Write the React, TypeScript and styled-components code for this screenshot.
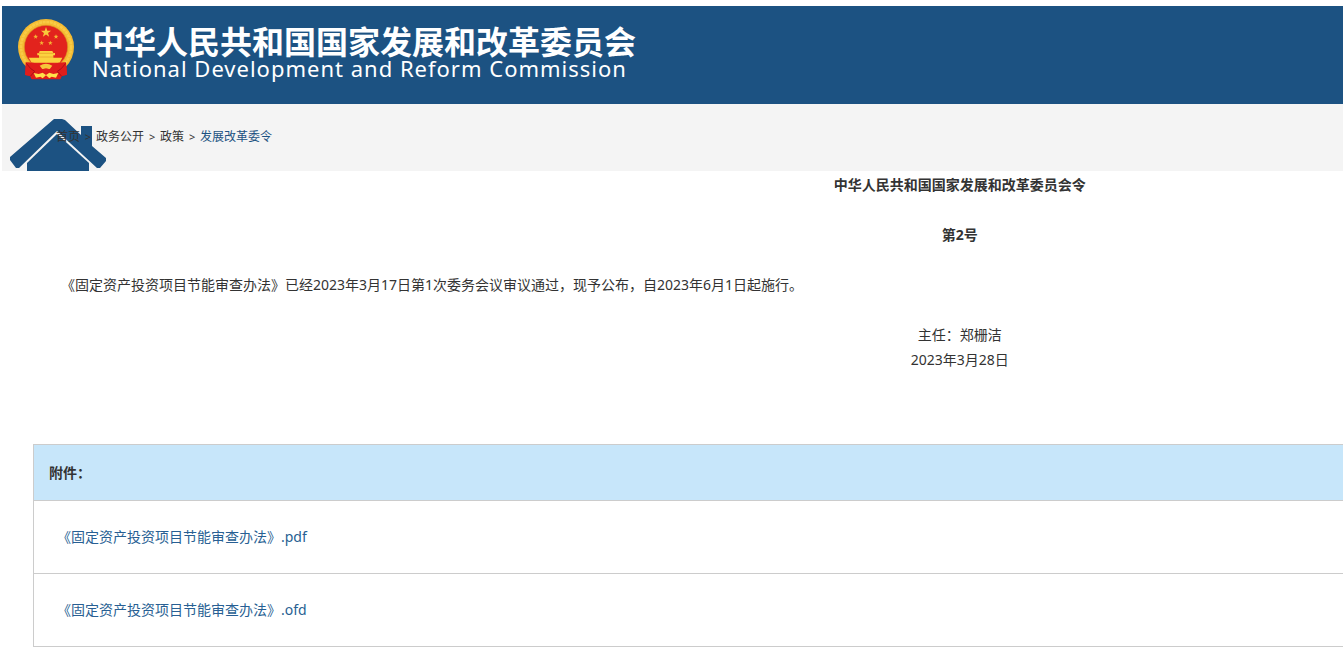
import React from "react";
import styled, { createGlobalStyle } from "styled-components";

const GlobalStyle = createGlobalStyle`
  * { box-sizing: border-box; }
  body {
    margin: 0;
    background: #fff;
    color: #333;
    font-family: "Noto Sans", "Noto Sans CJK SC", sans-serif;
    font-size: 14px;
    line-height: 25px;
  }
`;

const Page = styled.div`
  padding: 6px 0 16px 2px;
  overflow-x: hidden;
`;

const Header = styled.header`
  display: flex;
  gap: 17px;
  height: 98px;
  padding: 12px 15px;
  background: #1c5282;
  color: #fff;
`;

const EmblemIcon = styled.svg`
  flex: none;
  width: 58px;
  height: 64px;
`;

const Brand = styled.h1`
  margin: 0;
  padding-top: 5px;
  font-size: 32px;
  line-height: 34px;
  font-weight: 700;
  white-space: nowrap;
`;

const BrandChinese = styled.span`
  display: block;
  font-family: "Noto Sans CJK SC", sans-serif;
`;

const BrandEnglish = styled.span`
  display: block;
  font-family: "Noto Sans", sans-serif;
  font-size: 22px;
  line-height: 22px;
  font-weight: 400;
  letter-spacing: 1px;
`;

const Breadcrumb = styled.nav`
  position: relative;
  height: 67px;
  padding: 20px 54px;
  overflow: hidden;
  background: #f4f4f4;
  font-size: 12px;
`;

const HouseIcon = styled.svg`
  position: absolute;
  left: 8px;
  bottom: 0;
  width: 96px;
  height: 52px;
`;

const Trail = styled.ol`
  position: relative;
  display: flex;
  margin: 0;
  padding: 0;
  list-style: none;
`;

const Crumb = styled.li`
  display: flex;
  white-space: nowrap;
`;

const CrumbLink = styled.a<{ $current?: boolean }>`
  color: ${(p) => (p.$current ? "#1c5282" : "#333")};
  text-decoration: none;
`;

const Separator = styled.span`
  width: 16px;
  font-size: 11px;
  text-align: center;
`;

/* The document body is wider than the viewport and runs off its right edge. */
const Article = styled.main`
  width: 143%;
`;

const Notice = styled.section`
  display: flex;
  flex-direction: column;
  gap: 25px;
  padding: 1px 33px 72px 31px;
`;

const Heading = styled.h2`
  margin: 0;
  font-size: 14px;
  line-height: 25px;
  text-align: center;
`;

const Paragraph = styled.p`
  margin: 0;
  text-indent: 28px;
`;

const Signature = styled.p`
  margin: 0;
  text-align: center;
`;

const Attachments = styled.table`
  width: 97%;
  margin-left: 31px;
  border-collapse: collapse;
  text-align: left;
`;

const AttachmentTitle = styled.th`
  height: 56px;
  padding: 0 15px;
  border: 1px solid #ccc;
  background: #c7e6fa;
  font-weight: 700;
`;

const AttachmentCell = styled.td`
  height: 73px;
  padding: 0 23px 2px;
  border: 1px solid #ccc;
`;

const FileLink = styled.a`
  color: #285f93;
  text-decoration: none;
`;

const STAR = "0,-10 2.4,-3.2 9.5,-3.1 3.8,1.2 5.9,8.1 0,4 -5.9,8.1 -3.8,1.2 -9.5,-3.1 -2.4,-3.2";

const smallStars = [
  { x: 107, y: 110 },
  { x: 168, y: 110 },
  { x: 125, y: 129 },
  { x: 151, y: 129 },
];

function Emblem() {
  return (
    <EmblemIcon viewBox="51 54 174 192" aria-hidden="true">
      <path d="M79 184 76 225l15 4 4 9h86l4-9 16-5-3-40z" fill="#d8171b" />
      <circle cx="138" cy="141" r="84" fill="#f4ba32" />
      <circle cx="138" cy="141" r="75" fill="none" stroke="#f8cb45" strokeWidth="8" strokeDasharray="9 2" />
      <circle cx="138" cy="141" r="65" fill="#e2231d" stroke="#d99222" strokeWidth="2" />
      <polygon points={STAR} transform="translate(138 97) scale(1.6)" fill="#f8c93b" />
      {smallStars.map((s) => (
        <polygon key={`${s.x}-${s.y}`} points={STAR} transform={`translate(${s.x} ${s.y}) scale(.75)`} fill="#f5b534" />
      ))}
      <path d="M119 153h38l3 6h5v7h-5v7h27l-8 15H95l-9-15h31v-7h-5v-7h5z" fill="#fbd33f" />
      <path d="M115 160h46M117 171h42" stroke="#e59a25" strokeWidth="2" />
      <path d="M77 187q23-1 36 6 7-4 25-4t25 4q13-7 35-6l3 37-16 4-4 9-43-1-43 1-5-9-15-3z" fill="#df1d1b" />
      <path d="M79 190q14 20 25 24M197 190q-14 20-25 24M91 229l13-15M185 229l-13-15" fill="none" stroke="#a80f18" strokeWidth="3" />
      <path d="M119 197q19-11 38 0l-6 8q-13 9-26 0z" fill="#f6c63a" />
      <path d="M125 209q13-9 26 0-3 9-13 10-10-1-13-10z" fill="#df211c" />
      <path d="M101 219l15 3 12-4 10 7 10-7 12 4 15-3-7 14-13-3-7 5-10-9-10 9-7-5-13 3z" fill="#ffe14a" />
    </EmblemIcon>
  );
}

function House() {
  return (
    <HouseIcon viewBox="0 0 96 52" aria-hidden="true">
      <path d="M44 0h8l3 1 16 15V7h11v20l14 12v3l-6 7h-3L47 12 9 49H6l-6-8v-3z" fill="#1c5282" />
      <path d="M47 15 79 44v8H17v-8z" fill="#1c5282" />
    </HouseIcon>
  );
}

const crumbs = ["首页", "政务公开", "政策", "发展改革委令"];
const files = ["《固定资产投资项目节能审查办法》.pdf", "《固定资产投资项目节能审查办法》.ofd"];

export default function App() {
  return (
    <Page lang="zh-CN">
      <GlobalStyle />
      <Header>
        <Emblem />
        <Brand>
          <BrandChinese>中华人民共和国国家发展和改革委员会</BrandChinese>
          <BrandEnglish lang="en">National Development and Reform Commission</BrandEnglish>
        </Brand>
      </Header>
      <Breadcrumb aria-label="当前位置">
        <House />
        <Trail>
          {crumbs.map((label, i) => (
            <Crumb key={label}>
              {i > 0 && <Separator aria-hidden="true">&gt;</Separator>}
              <CrumbLink href="#" $current={i === crumbs.length - 1}>{label}</CrumbLink>
            </Crumb>
          ))}
        </Trail>
      </Breadcrumb>
      <Article>
        <Notice>
          <Heading>中华人民共和国国家发展和改革委员会令</Heading>
          <Heading as="h3">第2号</Heading>
          <Paragraph>《固定资产投资项目节能审查办法》已经2023年3月17日第1次委务会议审议通过，现予公布，自2023年6月1日起施行。</Paragraph>
          <Signature>
            主任：郑栅洁
            <br />
            2023年3月28日
          </Signature>
        </Notice>
        <Attachments>
          <thead>
            <tr>
              <AttachmentTitle scope="col">附件：</AttachmentTitle>
            </tr>
          </thead>
          <tbody>
            {files.map((name) => (
              <tr key={name}>
                <AttachmentCell>
                  <FileLink href="#">{name}</FileLink>
                </AttachmentCell>
              </tr>
            ))}
          </tbody>
        </Attachments>
      </Article>
    </Page>
  );
}
